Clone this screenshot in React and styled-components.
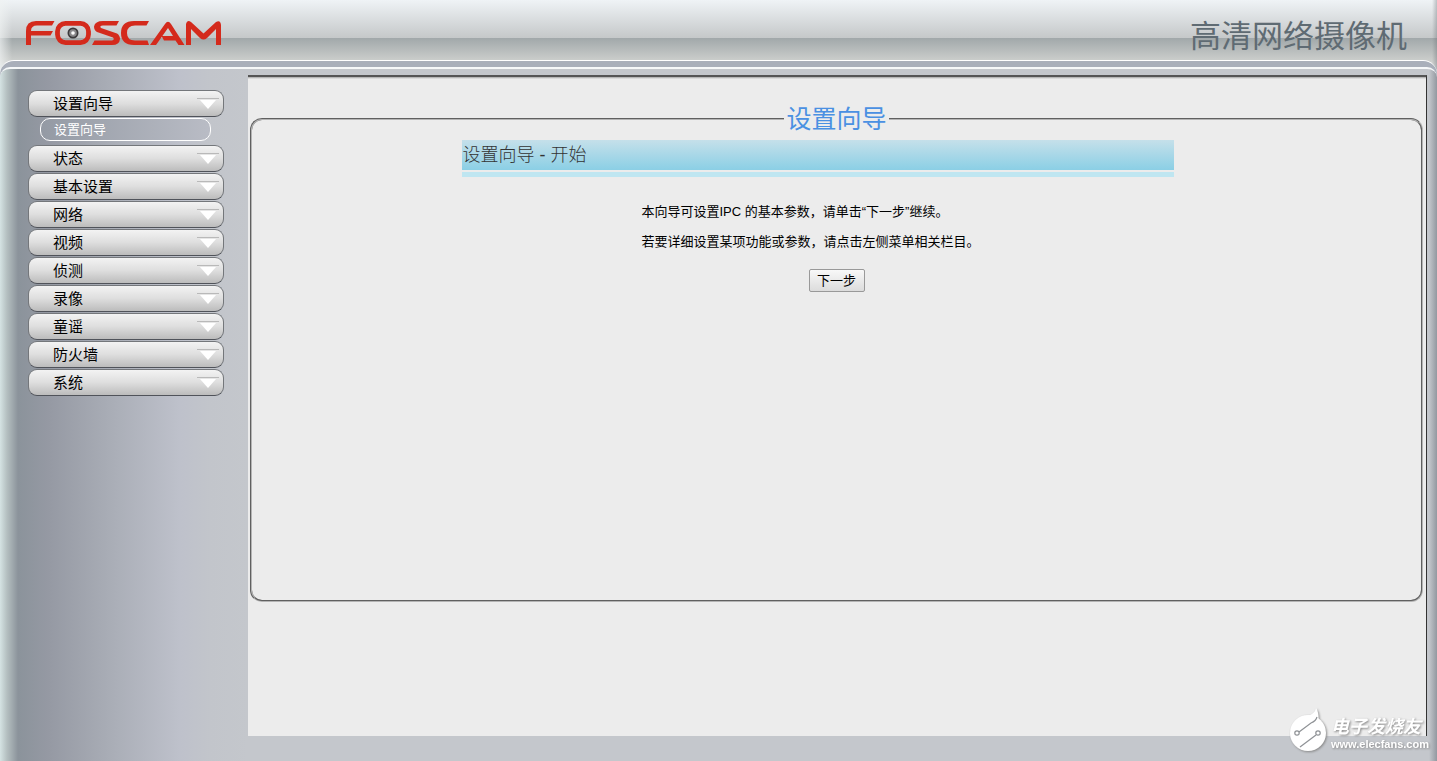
import React, { useState } from 'react';
import styled, { createGlobalStyle } from 'styled-components';

const menuItems = ['状态', '基本设置', '网络', '视频', '侦测', '录像', '童谣', '防火墙', '系统'];

const Logo = () => (
  <LogoSvg viewBox="0 0 196 26" role="img" aria-label="Foscam">
    <g fill="#d42a1c">
      <path d="M0 24V10Q0 0 10 0H28.5L26 4.5H11Q5 4.5 5 10H27L24.5 14.5H5V24Z" />
      <path d="M93 0L90.5 4.500H77Q73 4.5 75 7L91 12.5Q94 14.5 94 18Q93.5 24 86 24H66L68.5 19.500H86Q89 18.5 87 16.5L71 11Q68 9 68 5.5Q69 0 77 0Z" />
      <path d="M123 0L120.5 4.500H109Q101 4.5 101 12T109 19.500H121.5L123 24H108Q95 24 95 12T108 0Z" />
      <path d="M124 24L139 3Q142 -1.5 145 3L158.5 24H152.5L149.5 19.500H138L135.5 15H147L142 7L130 24Z" />
      <path d="M160 24V3Q161 -1.5 165 1L177.5 12.5L190 1Q194.5 -1.5 195 4V24H190V8L181 17Q177.5 20 174 17L165 8V24Z" />
    </g>
    <rect x="31.5" y="2.4" width="31" height="19.2" rx="8" fill="none" stroke="#d42a1c" strokeWidth="4.8" />
    <circle cx="47" cy="12" r="5.5" fill="#3c3a3c" />
    <circle cx="47" cy="12" r="3.8" fill="#8a898b" />
    <circle cx="47" cy="12" r="1.8" fill="#fff" />
  </LogoSvg>
);

const Arrow = () => (
  <svg width="22" height="12" viewBox="0 0 22 12" aria-hidden="true">
    <path d="M0 0.5H22" stroke="#b9b9b9" />
    <path d="M1 1.5H21" stroke="#e6e6e6" />
    <path d="M3 2H19L11 11Z" fill="#fff" />
  </svg>
);

const App = () => {
  const [open, setOpen] = useState(true);

  return (
    <Page>
      <GlobalStyle />
      <Header>
        <Logo />
        <Product>高清网络摄像机</Product>
      </Header>
      <Rim>
        <Body>
          <Sidebar>
            <MenuButton type="button" onClick={() => setOpen(!open)}>
              设置向导
              <Arrow />
            </MenuButton>
            {open && <SubLink href="#wizard">设置向导</SubLink>}
            {menuItems.map((item) => (
              <MenuButton type="button" key={item}>
                {item}
                <Arrow />
              </MenuButton>
            ))}
          </Sidebar>
          <Content>
            <Wizard>
              <legend>设置向导</legend>
              <Panel>
                <StepTitle>设置向导 - 开始</StepTitle>
                <StepText>
                  <p>本向导可设置IPC 的基本参数，请单击“下一步”继续。</p>
                  <p>若要详细设置某项功能或参数，请点击左侧菜单相关栏目。</p>
                  <NextButton type="button">下一步</NextButton>
                </StepText>
              </Panel>
            </Wizard>
          </Content>
        </Body>
      </Rim>
      <Watermark>
        <svg width="38" height="46" viewBox="0 0 38 46" aria-hidden="true">
          <circle cx="18" cy="26" r="18" fill="#fff" />
          <path d="M26 1C29 6 29 11 28 15L12 10C21 9 25 6 26 1Z" fill="#fff" />
          <g fill="none" stroke="#8f9296" strokeWidth="1.2">
            <circle cx="7" cy="26" r="2.2" />
            <circle cx="28" cy="26" r="2.200" />
            <path d="M9 25L21 16Q26 14 27 10M26 28L10 40" />
          </g>
        </svg>
        <WatermarkText>
          <strong>电子发烧友</strong>
          <span>www.elecfans.com</span>
        </WatermarkText>
      </Watermark>
    </Page>
  );
};

const GlobalStyle = createGlobalStyle`
  * {
    box-sizing: border-box;
  }

  body {
    margin: 0;
    font-family: 'Liberation Sans', 'Noto Sans CJK SC', sans-serif;
    font-size: 13px;
    color: #000;
  }

  button {
    font-family: inherit;
  }
`;

const Page = styled.div`
  position: relative;
  display: flex;
  flex-direction: column;
  min-height: 100vh;
  background:
    linear-gradient(to right, rgba(240, 243, 243, 0.7), rgba(240, 243, 243, 0) 12px),
    linear-gradient(to left, rgba(110, 115, 120, 0.4), rgba(110, 115, 120, 0) 5px),
    linear-gradient(#eff3f6 0, #c5c8c9 38px, #a1a8aa 38px, #ced0ce 62px, #d8e0e0 70px);
`;

const Header = styled.header`
  display: flex;
  justify-content: space-between;
  align-items: center;
  height: 60px;
  padding: 8px 30px 0 26px;
`;

const LogoSvg = styled.svg`
  width: 196px;
  height: 26px;
`;

const Product = styled.h1`
  margin: 0;
  padding-top: 6px;
  font-size: 31px;
  line-height: 40px;
  font-weight: 400;
  color: #5f6b73;
`;

const Rim = styled.div`
  display: flex;
  flex: 1;
  padding-top: 6px;
  border-top: 1px solid #fff;
  border-radius: 14px 14px 0 0;
  background: #a9afba;
`;

const Body = styled.div`
  display: flex;
  flex: 1;
  padding: 6px 10px 25px 0;
  border-top: 2px solid #f6f8f9;
  border-radius: 10px 10px 0 0;
  background:
    linear-gradient(to left, #9398a0 0, rgba(196, 199, 205, 0) 8px),
    linear-gradient(to right, #d5e3e3 0, #b4bfc0 7px, #8b939b 18px, #9599a3 48px, #a9adb6 110px, #bec1cb 180px, #c2c5cb 210px, #c4c7cc 248px);
`;

const Sidebar = styled.nav`
  display: flex;
  flex-direction: column;
  gap: 1px;
  width: 248px;
  padding: 15px 24px 0 28px;
`;

const MenuButton = styled.button`
  display: flex;
  justify-content: space-between;
  align-items: center;
  height: 27px;
  padding: 0 4px 0 24px;
  border: 1px solid #74777b;
  border-bottom-color: #50535a;
  border-radius: 9px;
  background: linear-gradient(#f3f3f3, #dedede 50%, #bcbcbc);
  font-size: 15px;
  line-height: 20px;
  color: #000;
  cursor: pointer;
`;

const SubLink = styled.a`
  height: 23px;
  margin: 0 13px 3px 12px;
  padding-left: 13px;
  border: 1px solid #fff;
  border-radius: 10px;
  background: linear-gradient(to right, #949aa4, #b9bcc5);
  font-size: 13px;
  line-height: 22px;
  color: #fff;
  text-decoration: none;
`;

const Content = styled.main`
  flex: 1;
  padding: 26px 3px 134px 2px;
  border-top: 2px solid #555;
  border-right: 1px solid #333;
  background: linear-gradient(#a5a5a5 0, #ececec 2px);
`;

const Wizard = styled.fieldset`
  height: 100%;
  margin: 0;
  padding: 5px 0 0;
  border: 2px groove #b4b4b4;
  border-radius: 12px;

  legend {
    margin: 0 auto;
    padding: 0 2px;
    font-size: 25px;
    line-height: 32px;
    color: #4a90e2;
  }
`;

const Panel = styled.section`
  width: 750px;
  max-width: 100%;
  margin: 0 auto;
`;

const StepTitle = styled.h2`
  width: 95%;
  height: 37px;
  margin: 0;
  padding-left: 1px;
  border-bottom: 5px solid #bfe6f1;
  background: linear-gradient(#c5e0ea, #8bcfe5 30px, #ececec 30px);
  font-size: 18px;
  line-height: 30px;
  font-weight: 300;
  color: #333;
`;

const StepText = styled.div`
  display: flex;
  flex-direction: column;
  width: 390px;
  max-width: 100%;
  margin: 20px auto 0;

  p {
    margin: 0;
    line-height: 30px;
  }
`;

const NextButton = styled.button`
  align-self: center;
  width: 56px;
  height: 23px;
  margin-top: 12px;
  padding: 0;
  border: 1px solid #999;
  border-radius: 2px;
  background: linear-gradient(#f8f8f8, #dcdcdc);
  font-size: 13px;
  line-height: 20px;
  color: #000;
`;

/* sits over the lower right corner of the page */
const Watermark = styled.div`
  position: absolute;
  right: 8px;
  bottom: 8px;
  display: flex;
  align-items: center;
  gap: 3px;
  color: #fff;
  filter: drop-shadow(1px 1px 1px #888);
`;

const WatermarkText = styled.div`
  display: flex;
  flex-direction: column;
  padding-top: 8px;

  strong {
    font-size: 18px;
    line-height: 20px;
    font-style: italic;
  }

  span {
    font-size: 11px;
    line-height: 14px;
    font-weight: 700;
  }
`;

export default App;
